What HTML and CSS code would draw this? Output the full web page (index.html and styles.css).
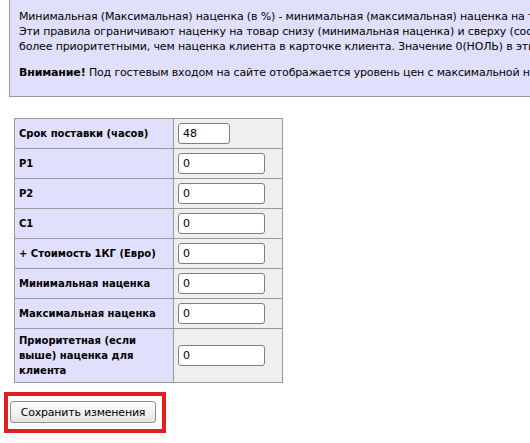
FILE: index.html
```html
<!DOCTYPE html>
<html lang="ru">
<head>
<meta charset="utf-8">
<title>Настройки наценки</title>
<link rel="stylesheet" href="styles.css">
</head>
<body>
<div class="notice">
  <p>Минимальная (Максимальная) наценка (в %) - минимальная (максимальная) наценка на товар для всех клиентов.<br>
  Эти правила ограничивают наценку на товар снизу (минимальная наценка) и сверху (соответственно) и являются<br>
  более приоритетными, чем наценка клиента в карточке клиента. Значение 0(НОЛЬ) в этих полях означает отсутствие ограничения.</p>
  <p class="warn"><b>Внимание!</b> Под гостевым входом на сайте отображается уровень цен с максимальной наценкой.</p>
</div>

<form class="form">
  <table class="settings">
    <tr><td class="lbl">Срок поставки (часов)</td><td class="val"><input class="inp short" type="text" value="48"></td></tr>
    <tr><td class="lbl">P1</td><td class="val"><input class="inp" type="text" value="0"></td></tr>
    <tr><td class="lbl">P2</td><td class="val"><input class="inp" type="text" value="0"></td></tr>
    <tr><td class="lbl">C1</td><td class="val"><input class="inp" type="text" value="0"></td></tr>
    <tr><td class="lbl">+ Стоимость 1КГ (Евро)</td><td class="val"><input class="inp" type="text" value="0"></td></tr>
    <tr><td class="lbl">Минимальная наценка</td><td class="val"><input class="inp" type="text" value="0"></td></tr>
    <tr><td class="lbl">Максимальная наценка</td><td class="val"><input class="inp" type="text" value="0"></td></tr>
    <tr><td class="lbl">Приоритетная (если выше) наценка для клиента</td><td class="val"><input class="inp" type="text" value="0"></td></tr>
  </table>
  <div class="savebox"><button class="save" type="button">Сохранить изменения</button></div>
</form>
</body>
</html>
```
FILE: styles.css
```css
html, body {
  margin: 0;
  padding: 0;
  background: #ffffff;
  overflow: hidden;
}
body {
  font-family: "DejaVu Sans", Verdana, sans-serif;
  font-size: 11px;
  color: #000;
  width: 530px;
  height: 443px;
}
.notice {
  margin-left: 9px;
  width: 800px;
  background: #e0e0fc;
  border: 1px solid #999;
  border-top: none;
  padding: 9px 9px 16px 9px;
  line-height: 15px;
  white-space: nowrap;
  letter-spacing: -0.15px;
}
.notice p {
  margin: 0;
}
.notice p.warn {
  margin-top: 11px;
}
.form {
  margin: 21px 0 0 14px;
}
.settings {
  border-collapse: collapse;
  border: 1px solid #999;
}
.settings td {
  border: 1px solid #999;
  padding: 4px;
  vertical-align: middle;
  line-height: 15px;
}
.lbl {
  width: 150px;
  background: #e0e0fc;
  font-weight: bold;
  font-size: 10px;
}
.val {
  width: 100px;
  background: #efefef;
}
.inp {
  display: block;
  box-sizing: border-box;
  width: 87px;
  height: 21px;
  margin: 0;
  padding: 0 4px;
  border: 1px solid #7f7f7f;
  border-radius: 3px;
  background: #fff;
  font-family: "DejaVu Sans", Verdana, sans-serif;
  font-size: 11px;
  color: #000;
}
.inp.short {
  width: 52px;
}
.savebox {
  display: inline-block;
  margin: 9px 0 0 -10px;
  border: 4px solid #e41e1e;
  padding: 5px 6px 6px 2px;
}
.save {
  display: block;
  box-sizing: border-box;
  width: 146px;
  height: 22px;
  margin: 0;
  padding: 0;
  border: 1px solid #8f8f8f;
  border-radius: 3px;
  background: linear-gradient(#ffffff, #e4e4e4);
  font-family: "DejaVu Sans", Verdana, sans-serif;
  font-size: 11px;
  letter-spacing: -0.2px;
  color: #000;
}
```
